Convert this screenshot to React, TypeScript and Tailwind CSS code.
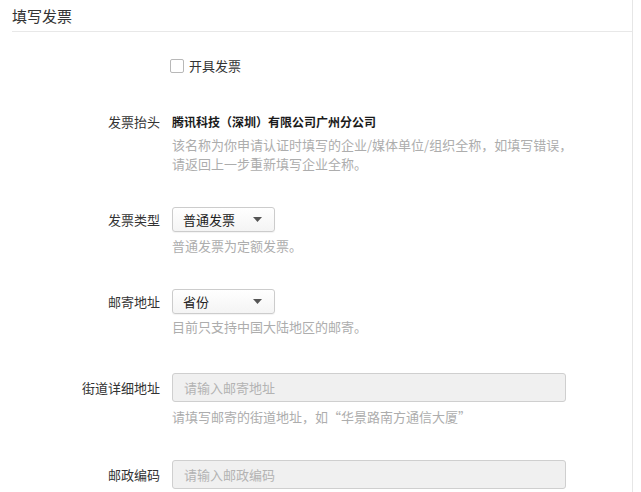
import React from "react";

const font = { fontFamily: '"Noto Sans CJK SC", "Noto Sans", sans-serif' };

function Caret() {
  return (
    <svg width="9" height="5" viewBox="0 0 9 5" className="block">
      <path d="M0 0 L9 0 L4.5 5 Z" fill="#555" />
    </svg>
  );
}

function Select({ value }: { value: string }) {
  return (
    <div className="w-[103px] h-[25px] border border-[#cccccc] rounded-[3px] bg-gradient-to-b from-white to-[#f4f4f4] flex items-center justify-between pl-[10px] pr-[12px] shadow-[0_1px_1px_rgba(0,0,0,0.05)]">
      <span className="text-[13px] leading-[20px] text-[#222]">{value}</span>
      <Caret />
    </div>
  );
}

function Input({ placeholder }: { placeholder: string }) {
  return (
    <div className="w-[394px] h-[29px] border border-[#cfcfcf] rounded-[3px] bg-[#f0f0f0] flex items-center pl-[11px]">
      <span className="text-[13px] leading-[20px] text-[#b3b3b3]">{placeholder}</span>
    </div>
  );
}

function Label({ children }: { children: React.ReactNode }) {
  return (
    <div className="w-[160px] shrink-0 text-right text-[13px] leading-[20px] text-[#333]">{children}</div>
  );
}

function Hint({ children, className = "" }: { children: React.ReactNode; className?: string }) {
  return <div className={`text-[13px] leading-[19px] text-[#adadad] ${className}`}>{children}</div>;
}

export default function App() {
  return (
    <div style={font} className="w-[633px] h-[492px] bg-white border-r border-[#e6e6e6] overflow-hidden">
      <div className="ml-[12px] h-[32px] pt-[6px] border-b border-[#e8e8e8]">
        <div className="text-[15px] leading-[20px] text-[#333]">填写发票</div>
      </div>

      <div className="mt-[24px] flex items-center h-[20px] pl-[170px]">
        <div className="w-[14px] h-[14px] border border-[#b8b8b8] rounded-[2px] bg-white" />
        <span className="ml-[5px] text-[13px] leading-[20px] text-[#333]">开具发票</span>
      </div>

      <div className="mt-[36px] flex gap-[12px]">
        <Label>发票抬头</Label>
        <div>
          <div className="text-[12px] leading-[20px] text-[#1a1a1a] font-semibold">腾讯科技（深圳）有限公司广州分公司</div>
          <Hint className="mt-[3px]">该名称为你申请认证时填写的企业/媒体单位/组织全称，如填写错误，</Hint>
          <Hint>请返回上一步重新填写企业全称。</Hint>
        </div>
      </div>

      <div className="mt-[34px] flex gap-[12px]">
        <div className="h-[25px] flex items-center"><Label>发票类型</Label></div>
        <div>
          <Select value="普通发票" />
          <Hint className="mt-[4px]">普通发票为定额发票。</Hint>
        </div>
      </div>

      <div className="mt-[34px] flex gap-[12px]">
        <div className="h-[25px] flex items-center"><Label>邮寄地址</Label></div>
        <div>
          <Select value="省份" />
          <Hint className="mt-[3px]">目前只支持中国大陆地区的邮寄。</Hint>
        </div>
      </div>

      <div className="mt-[37px] flex gap-[12px]">
        <div className="h-[29px] flex items-center"><Label>街道详细地址</Label></div>
        <div>
          <Input placeholder="请输入邮寄地址" />
          <Hint className="mt-[5px]">请填写邮寄的街道地址，如“华景路南方通信大厦”</Hint>
        </div>
      </div>

      <div className="mt-[34px] flex gap-[12px]">
        <div className="h-[29px] flex items-center"><Label>邮政编码</Label></div>
        <div>
          <Input placeholder="请输入邮政编码" />
        </div>
      </div>
    </div>
  );
}
